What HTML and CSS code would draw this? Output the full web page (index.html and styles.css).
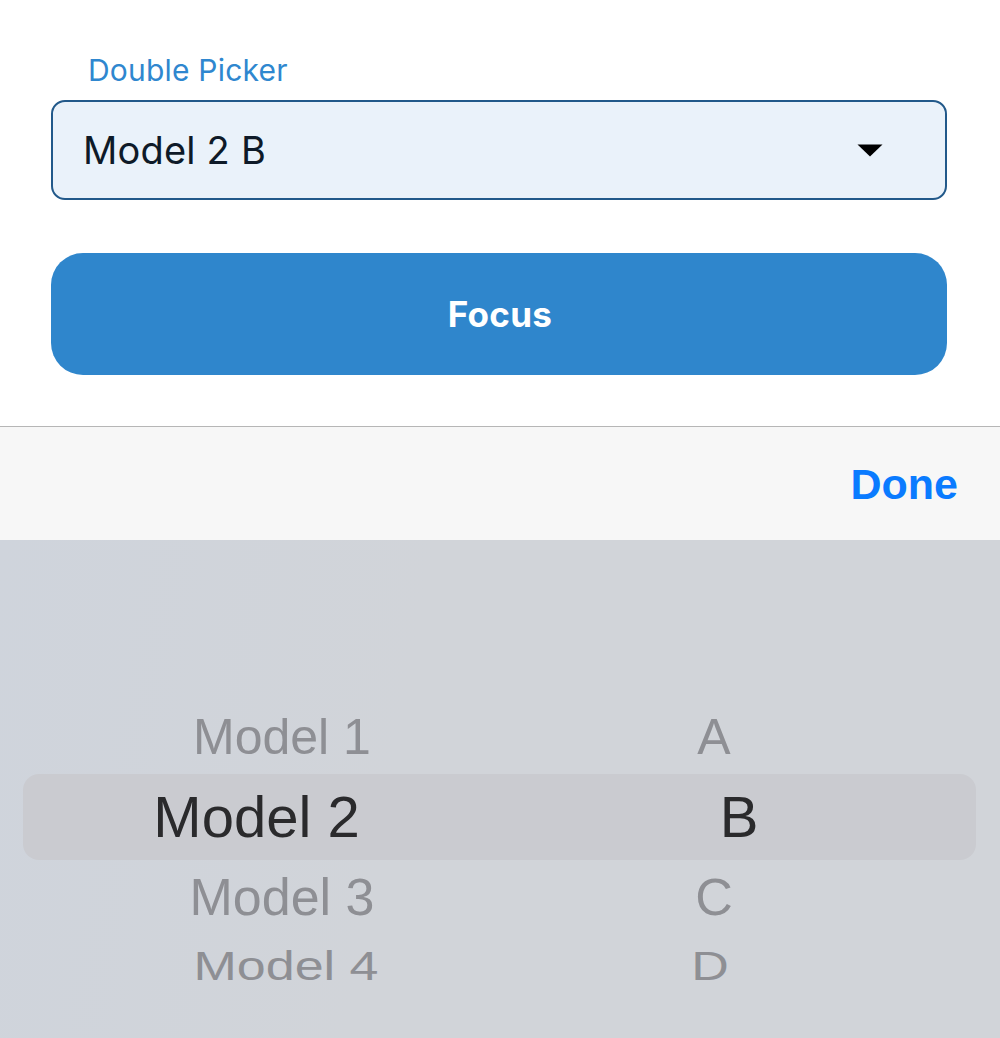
FILE: index.html
```html
<!DOCTYPE html>
<html>
<head>
<meta charset="utf-8">
<link rel="stylesheet" href="styles.css">
</head>
<body>
<div class="form">
  <div class="label">Double Picker</div>
  <div class="input">
    <span class="value">Model 2 B</span>
    <svg class="caret" width="26" height="13" viewBox="0 0 26 13"><path d="M0.5 0.5 H25.5 L13 12.5 Z" fill="#000"/></svg>
  </div>
  <div class="button">Focus</div>
</div>
<div class="toolbar">
  <span class="done">Done</span>
</div>
<div class="picker">
  <div class="row r1"><span class="left">Model 1</span><span class="right">A</span></div>
  <div class="row r2 selected"><span class="left">Model 2</span><span class="right">B</span></div>
  <div class="row r3"><span class="left">Model 3</span><span class="right">C</span></div>
  <div class="row r4"><span class="left">Model 4</span><span class="right">D</span></div>
</div>
</body>
</html>
```
FILE: styles.css
```css
html, body {
  margin: 0;
  padding: 0;
  background: #ffffff;
}
body {
  width: 1000px;
  height: 1038px;
  overflow: hidden;
  font-family: Inter, "Liberation Sans", sans-serif;
}
.form {
  padding: 50px 53px 0 51px;
  height: 376px;
}
.label {
  margin-left: 37px;
  font-size: 30px;
  line-height: 40px;
  color: #2f87cf;
  letter-spacing: 0.2px;
}
.input {
  margin-top: 10px;
  height: 96px;
  border: 2px solid #22598a;
  border-radius: 14px;
  background: #eaf2fa;
  display: flex;
  align-items: center;
  justify-content: space-between;
  padding: 0 62px 0 30px;
}
.value {
  font-size: 38px;
  color: #0e1a28;
  letter-spacing: 0.2px;
}
.caret {
  display: block;
  margin-top: 1px;
}
.button {
  margin-top: 53px;
  height: 122px;
  border-radius: 32px;
  background: #2f86cc;
  color: #ffffff;
  font-weight: 700;
  font-size: 35px;
  letter-spacing: 0.3px;
  display: flex;
  align-items: center;
  justify-content: center;
  padding-left: 2px;
}
.toolbar {
  border-top: 1px solid #b6b6b6;
  height: 113px;
  background: #f7f7f7;
  display: flex;
  align-items: center;
  justify-content: flex-end;
  padding-right: 42px;
}
.done {
  font-family: "Liberation Sans", Arial, sans-serif;
  font-weight: 700;
  font-size: 43px;
  color: #0a7bff;
  margin-top: 2px;
}
.picker {
  height: 498px;
  background: linear-gradient(100deg, #cfd4dc 0%, #d1d4d9 40%, #d1d4d9 100%);
  padding-top: 160px;
  box-sizing: border-box;
  font-family: "Liberation Sans", Arial, sans-serif;
  color: #8e8f94;
}
.row {
  display: grid;
  grid-template-columns: 564px 300px;
}
.row span {
  text-align: center;
  white-space: nowrap;
}
.r1 {
  height: 74px;
  font-size: 50px;
  line-height: 74px;
}
.r2 {
  height: 86px;
  font-size: 58px;
  line-height: 86px;
  margin: 0 24px 0 23px;
  grid-template-columns: 541px 300px;
  background: #cacbd0;
  border-radius: 16px;
  color: #2a2a2c;
}
.r2 .left {
  transform: translateX(-37px);
}
.r2 .right {
  transform: translateX(25px);
}
.r3 {
  height: 76px;
  font-size: 52px;
  line-height: 74px;
}
.r4 {
  height: 64px;
  font-size: 52px;
  line-height: 60px;
}
.r4 span {
  transform: scaleY(0.77);
}
.r4 .left {
  transform: translateX(4px) scaleY(0.77);
}
.r4 .right {
  transform: translateX(-4px) scaleY(0.77);
}
```
